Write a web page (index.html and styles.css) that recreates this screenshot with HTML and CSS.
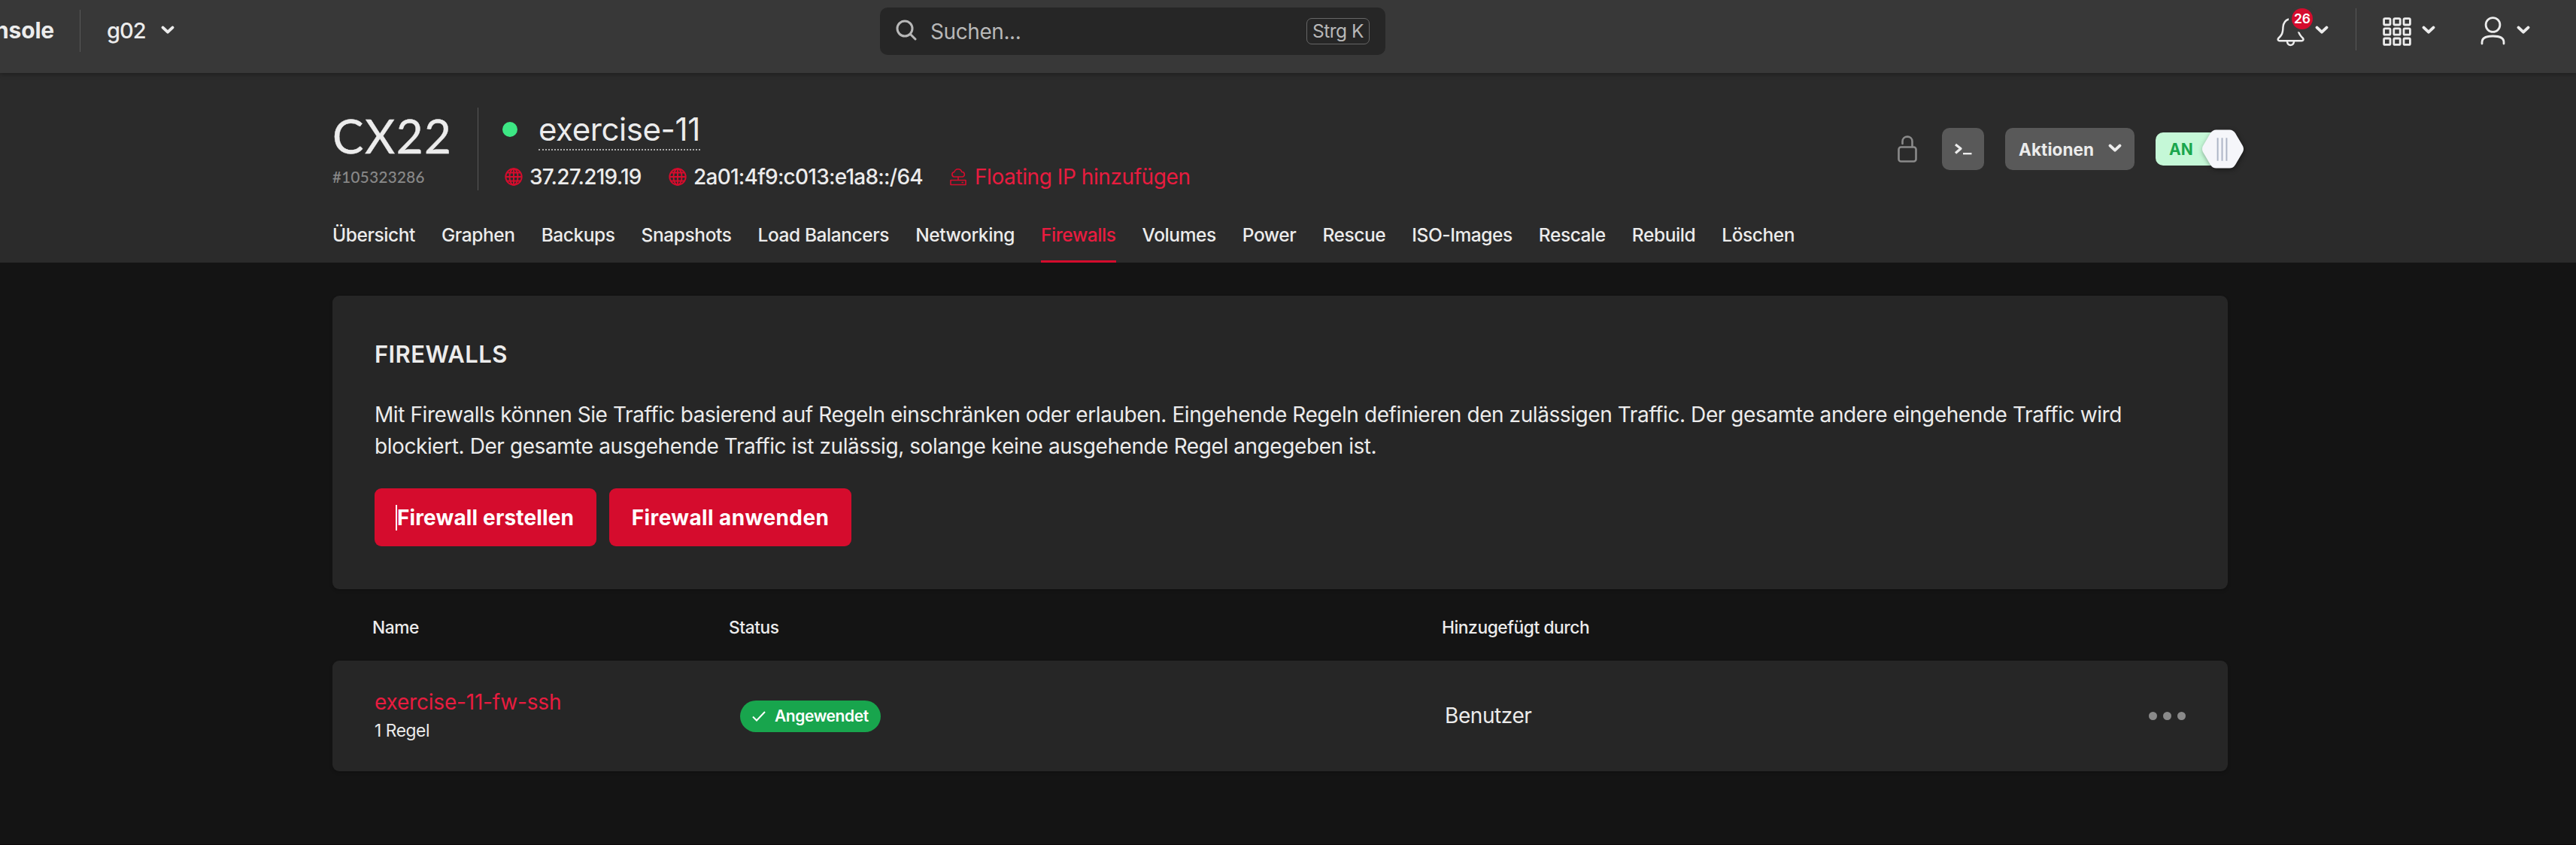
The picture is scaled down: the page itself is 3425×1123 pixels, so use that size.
FILE: index.html
```html
<!DOCTYPE html>
<html lang="de">
<head>
<meta charset="utf-8">
<title>exercise-11 – Firewalls</title>
<link rel="stylesheet" href="styles.css">
</head>
<body>
<svg width="0" height="0" class="defs" aria-hidden="true">
  <symbol id="chevron" viewBox="0 0 18 12"><path d="M2.6 2.6 9 8.6l6.400-6" fill="none" stroke="currentColor" stroke-width="4" stroke-linecap="round" stroke-linejoin="round"/></symbol>
  <symbol id="globe" viewBox="0 0 24 24"><g fill="none" stroke="currentColor" stroke-width="1.900"><circle cx="12" cy="12" r="10.700"/><ellipse cx="12" cy="12" rx="5.500" ry="10.700"/><path d="M12 1.300v21.400M1.300 12h21.400M3 6.500h18M3 17.500h18"/></g></symbol>
</svg>

<header class="topbar">
  <div class="brand"><span class="brand-name">Console</span></div>
  <div class="project"><span class="project-name">g02</span><svg class="chevron"><use href="#chevron"/></svg></div>
  <div class="search">
    <svg class="search-icon" viewBox="0 0 28 28"><g fill="none" stroke="currentColor" stroke-width="3" stroke-linecap="round"><circle cx="12" cy="12" r="10"/><path d="m20 20 6 6"/></g></svg>
    <span class="search-text">Suchen...</span>
    <kbd>Strg K</kbd>
  </div>
  <div class="notifications">
    <svg class="bell" viewBox="0 0 38 40"><g fill="none" stroke="currentColor" stroke-width="2.500" stroke-linecap="round" stroke-linejoin="round"><path d="M16 3.500C11 5 9 9 8.500 14c-.3 9-2 11-6.300 15-1 1.500-.3 3.200 1.600 3.200h29.500c2 0 2.700-1.700 1.700-3.200-3-3-4.800-5-5.700-8.500"/><path d="M14 33c.5 6.500 8.500 6.500 9 0"/></g></svg>
    <span class="count">26</span>
    <svg class="chevron"><use href="#chevron"/></svg>
  </div>
  <div class="apps">
    <svg class="grid-icon" viewBox="0 0 38 38"><g fill="none" stroke="currentColor" stroke-width="2.800"><rect x="1.600" y="1.600" width="8.400" height="8.400" rx="1.500"/><rect x="14.800" y="1.600" width="8.400" height="8.400" rx="1.500"/><rect x="28" y="1.600" width="8.400" height="8.400" rx="1.500"/><rect x="1.600" y="14.800" width="8.400" height="8.400" rx="1.500"/><rect x="14.800" y="14.800" width="8.400" height="8.400" rx="1.500"/><rect x="28" y="14.800" width="8.400" height="8.400" rx="1.500"/><rect x="1.600" y="28" width="8.400" height="8.400" rx="1.500"/><rect x="14.800" y="28" width="8.400" height="8.400" rx="1.500"/><rect x="28" y="28" width="8.400" height="8.400" rx="1.500"/></g></svg>
    <svg class="chevron"><use href="#chevron"/></svg>
  </div>
  <div class="account">
    <svg class="user-icon" viewBox="0 0 34 38"><g fill="none" stroke="currentColor" stroke-width="2.800" stroke-linecap="round"><circle cx="16.500" cy="11" r="9.400"/><path d="M2 36v-2c0-5 4-8 14.500-8S31 29 31 34v2"/></g></svg>
    <svg class="chevron"><use href="#chevron"/></svg>
  </div>
</header>

<section class="server">
  <div class="server-row">
    <div class="plan">
      <span class="plan-name">CX22</span>
      <span class="plan-id">#105323286</span>
    </div>
    <div class="identity">
      <div class="name-row"><span class="status-dot"></span><h1>exercise-11</h1></div>
      <div class="ips">
        <svg class="globe"><use href="#globe"/></svg><span class="ip ip4">37.27.219.19</span>
        <svg class="globe"><use href="#globe"/></svg><span class="ip ip6">2a01:4f9:c013:e1a8::/64</span>
        <svg class="float-icon" viewBox="0 0 22 24"><g fill="none" stroke="currentColor" stroke-width="1.600" stroke-linejoin="round"><path d="M5.500 12a3.300 3.300 0 0 1 .3-6.500 5.200 5.200 0 0 1 10 0 3.300 3.300 0 0 1 1 6.500zM11 12v4.500M1 16.500h20v6H1zM15.500 19.500H18"/></g></svg><a class="float-link">Floating IP hinzufügen</a>
      </div>
    </div>
    <div class="actions">
      <svg class="lock" viewBox="0 0 26 36"><g fill="none" stroke="currentColor" stroke-width="2.600" stroke-linecap="round"><rect x="1.500" y="15.500" width="23" height="19" rx="3"/><path d="M6.500 11V8c0-8.500 13-8.500 13 0v7"/></g></svg>
      <button class="terminal"><svg viewBox="0 0 24 16"><path d="m2 2 7 5.500L2 13.500" fill="none" stroke="currentColor" stroke-width="3.200" stroke-linejoin="round"/><path d="M12 14.200h11.500" stroke="currentColor" stroke-width="2.400"/></svg></button>
      <button class="menu"><span>Aktionen</span><svg class="chevron"><use href="#chevron"/></svg></button>
      <div class="power"><span>AN</span>
        <svg class="knob" viewBox="0 0 58 54"><path d="M20 1h18q5 0 8 5l10 17q2 4 0 8L46 48q-3 5-8 5H20q-5 0-8-5L2 31q-2-4 0-8L12 6q3-5 8-5z" fill="#f5f6fa"/><path d="M22 12v31M28 12v31M34 12v31" stroke="#adb5c6" stroke-width="2"/></svg>
      </div>
    </div>
  </div>
  <nav class="tabs">
    <a>Übersicht</a><a>Graphen</a><a>Backups</a><a>Snapshots</a><a>Load Balancers</a><a>Networking</a><a class="active">Firewalls</a><a>Volumes</a><a>Power</a><a>Rescue</a><a>ISO-Images</a><a>Rescale</a><a>Rebuild</a><a>Löschen</a>
  </nav>
</section>

<main>
  <section class="card">
    <h2>FIREWALLS</h2>
    <p>Mit Firewalls können Sie Traffic basierend auf Regeln einschränken oder erlauben. Eingehende Regeln definieren den zulässigen Traffic. Der gesamte andere eingehende Traffic wird<br>blockiert. Der gesamte ausgehende Traffic ist zulässig, solange keine ausgehende Regel angegeben ist.</p>
    <div class="buttons">
      <button class="primary create"><span class="caret"></span><span>Firewall erstellen</span></button>
      <button class="primary apply"><span>Firewall anwenden</span></button>
    </div>
  </section>
  <div class="table-head"><span>Name</span><span>Status</span><span>Hinzugefügt durch</span></div>
  <div class="table-row">
    <div class="cell-name"><a>exercise-11-fw-ssh</a><small>1 Regel</small></div>
    <div class="cell-status"><span class="badge"><svg viewBox="0 0 18 14"><path d="m1 7.500 5 5L17 1" fill="none" stroke="currentColor" stroke-width="2"/></svg><b>Angewendet</b></span></div>
    <div class="cell-by">Benutzer</div>
    <div class="more"><i></i><i></i><i></i></div>
  </div>
</main>
</body>
</html>
```
FILE: styles.css
```css
* { box-sizing: border-box; }
body { margin: 0; height: 1123px; overflow: hidden; background: #141414; color: #ececec; font-family: Inter, "Liberation Sans", sans-serif; font-size: 28px; letter-spacing: -.42px; border-bottom: 1px solid #0c0809; }
svg { display: block; flex: none; }
button { border: 0; font: inherit; color: inherit; padding: 0; }
.defs { position: absolute; }
.chevron { width: 18px; height: 12px; }

.topbar { position: relative; z-index: 1; display: flex; height: 97px; padding-right: 61px; background: #383838; box-shadow: 0 2px 6px rgba(0,0,0,.3); }
.brand { display: flex; justify-content: flex-end; width: 107px; height: 56px; margin-top: 13px; padding-right: 34px; border-right: 1px solid #585858; line-height: 55px; }
.brand-name { font-weight: 700; font-size: 30px; letter-spacing: -.2px; }
.project { display: flex; width: 1063px; padding-left: 35px; line-height: 82px; }
.project-name { width: 72px; font-weight: 500; font-size: 29px; letter-spacing: -1px; }
.project .chevron, .notifications .chevron, .account .chevron { margin-top: 34px; }
.search { display: flex; align-items: center; width: 672px; height: 63px; margin-top: 10px; padding: 0 21px; border-radius: 10px; background: #262626; color: #b8b8b8; }
.search-icon { width: 28px; height: 28px; margin-top: -3px; }
.search-text { margin-left: 18px; }
kbd { width: 84px; height: 35px; margin-left: auto; border: 1px solid #666; border-radius: 7px; font: 24.500px/33px Inter, sans-serif; text-align: center; letter-spacing: -.5px; }
.notifications { position: relative; display: flex; width: 105px; margin-left: auto; }
.bell { width: 38px; height: 40px; margin: 22px 13px 0 0; }
.count { position: absolute; left: 20px; top: 11px; width: 28px; height: 28px; border-radius: 50%; background: #d50c2d; box-shadow: 0 0 0 4px #383838; color: #fff; font-weight: 600; font-size: 17.500px; line-height: 28px; text-align: center; letter-spacing: 0; }
.apps { display: flex; gap: 14px; width: 166px; height: 56px; margin-top: 11px; padding-left: 35px; border-left: 1px solid #585858; }
.apps .chevron { margin-top: 23px; }
.grid-icon { width: 38px; height: 38px; margin-top: 12px; }
.account { display: flex; gap: 14px; }
.user-icon { width: 34px; height: 38px; margin-top: 22px; }

.server { display: flex; flex-direction: column; height: 252px; padding: 46px 441px 0 442px; background: #2b2b2b; }
.server-row { display: flex; height: 110px; }
.plan { display: flex; flex-direction: column; width: 194px; border-right: 1px solid #585858; }
.plan-name { height: 76px; font: 400 62px/74px Lato, Inter, sans-serif; letter-spacing: 1.500px; -webkit-text-stroke: .4px currentColor; }
.plan-id { font: 400 20.500px/32px Lato, Inter, sans-serif; color: #8a8a8a; letter-spacing: .4px; -webkit-text-stroke: .2px currentColor; }
.identity { padding-left: 32px; }
.name-row { display: flex; height: 58px; }
.status-dot { width: 20px; height: 20px; margin: 19px 28px 0 0; border-radius: 50%; background: #3de784; }
h1 { margin: 0; height: 57px; border-bottom: 2px dotted #aaa; font-weight: 400; font-size: 42px; line-height: 57px; }
.ips { display: flex; align-items: center; height: 42px; margin-top: 13px; padding-left: 3px; line-height: 42px; white-space: nowrap; }
.globe { width: 24px; height: 24px; margin-right: 9px; color: #d50c2d; }
.ip { font-weight: 500; letter-spacing: -.76px; }
.ip4 { width: 185px; }
.ip6 { width: 341px; }
.float-icon { width: 22px; height: 24px; margin-right: 11px; color: #d50c2d; }
.float-link { color: #e81c3f; }
.actions { display: flex; align-items: center; height: 56px; margin: 27px 0 0 auto; }
.lock { width: 26px; height: 36px; margin-right: 33px; color: #8a8a8a; }
.terminal, .menu { display: flex; align-items: center; height: 56px; border-radius: 10px; background: #595959; }
.terminal { justify-content: center; width: 56px; margin-right: 28px; }
.terminal svg { width: 24px; height: 16px; }
.menu { width: 172px; padding-left: 18px; margin-right: 28px; font-weight: 700; font-size: 22.500px; letter-spacing: .1px; }
.menu span { width: 119px; text-align: left; }
.menu .chevron { margin-top: -2px; }
.power { position: relative; width: 118px; height: 44px; border-radius: 10px; background: linear-gradient(90deg, #c5f8d7 75%, transparent 75%); padding-left: 18px; color: #1aa64d; font-weight: 700; font-size: 21px; line-height: 45px; letter-spacing: 0; }
.knob { position: absolute; right: 0; top: -5px; width: 57px; height: 54px; filter: drop-shadow(1px 2px 3px rgba(0,0,0,.4)); }
.tabs { display: flex; gap: 35px; height: 70px; margin-top: auto; font-weight: 500; font-size: 24.500px; line-height: 66px; }
.tabs .active { color: #e81c3f; border-bottom: 3px solid #d50c2d; }

main { padding: 44px 463px 0 442px; }
.card { height: 390px; padding: 55px 56px; border-radius: 9px; background: #262626; box-shadow: 0 2px 4px rgba(0,0,0,.2); }
h2 { margin: 0; font-weight: 600; font-size: 31px; line-height: 46px; letter-spacing: .4px; }
.card p { margin: 36px 0 35px; line-height: 42px; white-space: nowrap; }
.buttons { display: flex; gap: 17px; }
.primary { position: relative; height: 77px; border-radius: 9px; background: #d50c2d; color: #fff; font-weight: 700; font-size: 28px; letter-spacing: .15px; }
.create { width: 295px; }
.apply { width: 322px; letter-spacing: .4px; }
.caret { position: absolute; left: 28px; top: 22px; width: 2px; height: 34px; background: #fff; }
.table-head { display: grid; grid-template-columns: 474px 948px 1fr; height: 95px; padding-left: 53px; font-weight: 500; font-size: 22.750px; line-height: 102px; }
.table-row { display: grid; grid-template-columns: 486px 937px 1fr auto; align-items: center; height: 147px; padding: 0 56px; border-radius: 9px; background: #262626; box-shadow: 0 2px 4px rgba(0,0,0,.2); }
.cell-name { display: flex; flex-direction: column; margin-top: -3px; }
.cell-name a { color: #e81c3f; line-height: 42px; letter-spacing: -.2px; }
.cell-name small { font-size: 22.750px; line-height: 34px; }
.badge { display: flex; align-items: center; width: 187px; height: 42px; padding-left: 16px; border-radius: 21px; background: #18a54d; color: #fff; }
.badge svg { width: 18px; height: 14px; margin-right: 12px; }
.badge b { font-weight: 600; font-size: 21px; }
.cell-by { margin-top: -1px; }
.more { display: flex; gap: 8px; }
.more i { width: 11px; height: 11px; border-radius: 50%; background: #8a8a8a; }
```
